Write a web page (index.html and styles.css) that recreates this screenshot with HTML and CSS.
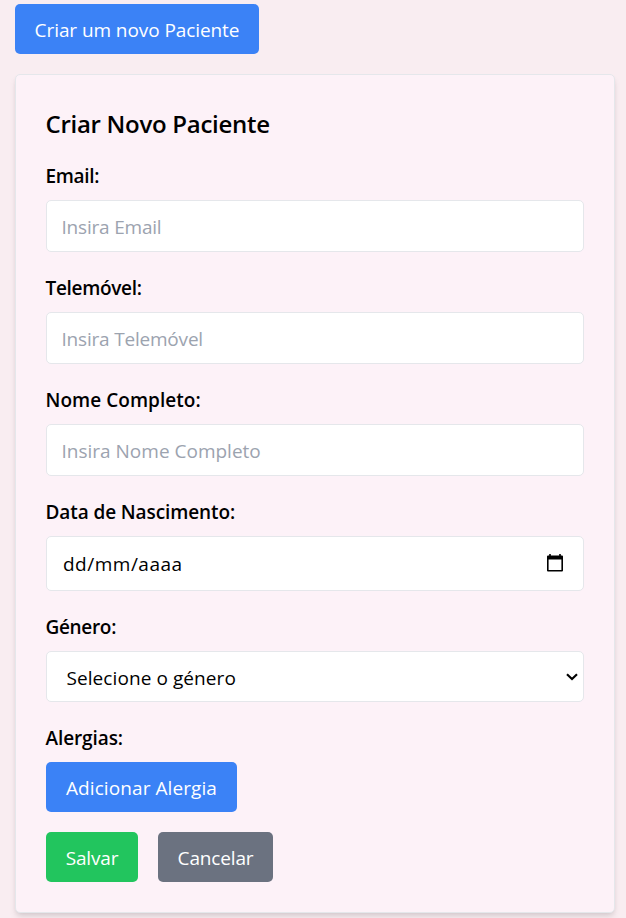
FILE: index.html
```html
<!DOCTYPE html>
<html lang="pt">
<head>
<meta charset="utf-8">
<title>Pacientes</title>
<link rel="stylesheet" href="styles.css">
</head>
<body>
<button class="btn btn-blue btn-create" type="button"><span>Criar um novo Paciente</span></button>
<form class="card">
  <h2 class="title">Criar Novo Paciente</h2>
  <div class="group">
    <label class="label" for="email">Email:</label>
    <input class="field" id="email" type="text" placeholder="Insira Email">
  </div>
  <div class="group">
    <label class="label" for="phone">Telemóvel:</label>
    <input class="field" id="phone" type="text" placeholder="Insira Telemóvel">
  </div>
  <div class="group">
    <label class="label label-name" for="name">Nome Completo:</label>
    <input class="field field-name" id="name" type="text" placeholder="Insira Nome Completo">
  </div>
  <div class="group">
    <span class="label label-loose">Data de Nascimento:</span>
    <div class="field date">
      <span>dd/mm/aaaa</span>
      <svg width="18" height="20" viewBox="0 0 18 20"><path fill="#000" fill-rule="evenodd" d="M3.200 1h1.600v1.500h8.400V1h1.600v1.500h1.200q1 0 1 1v14q0 1-1 1H2q-1 0-1-1v-14q0-1 1-1h1.200zM2.600 6.500v10.500h12.800V6.500z"/></svg>
    </div>
  </div>
  <div class="group">
    <span class="label">Género:</span>
    <div class="field select">
      <span>Selecione o género</span>
      <svg width="12" height="8" viewBox="0 0 12 8"><path fill="none" stroke="#000" stroke-width="2.1" d="M1 1.2 6 6.1 11 1.2"/></svg>
    </div>
  </div>
  <div class="allergies">
    <span class="label label-loose">Alergias:</span>
    <button class="btn btn-blue btn-add" type="button"><span>Adicionar Alergia</span></button>
  </div>
  <div class="actions">
    <button class="btn btn-green" type="button"><span>Salvar</span></button>
    <button class="btn btn-gray" type="button"><span>Cancelar</span></button>
  </div>
</form>
</body>
</html>
```
FILE: styles.css
```css
* { box-sizing: border-box; }
body {
  margin: 0;
  height: 918px;
  overflow: hidden;
  padding: 4px 11px 0 15px;
  background: #f9edf1;
  font: 19px/30px "Segoe UI", "Open Sans", sans-serif;
  color: #000;
}
.btn {
  display: block;
  height: 50px;
  padding: 2px 0 0 0;
  border: 0;
  border-radius: 5px;
  font: inherit;
  letter-spacing: -.15px;
  text-align: center;
  color: #fff;
}
.btn-blue { background: #3b82f6; }
.btn-create { width: 244px; letter-spacing: -.08px; }
.btn-add { width: 191px; letter-spacing: .08px; }
.btn-green { width: 92px; background: #22c55e; }
.btn-gray { width: 115px; background: #6b7280; }
.card {
  height: 839px;
  margin-top: 20px;
  padding: 30px;
  border: 1px solid #e5e7eb;
  border-radius: 5px;
  background: #fdf2f8;
  box-shadow: 0 5px 7.5px -1px rgba(0,0,0,.1), 0 2.5px 5px -2.5px rgba(0,0,0,.1);
}
.title {
  height: 39px;
  margin: 0 0 16px -.5px;
  font-size: 24px;
  font-weight: 600;
  line-height: 37px;
  letter-spacing: -.28px;
}
.group { margin-bottom: 20px; }
.label {
  display: block;
  height: 30px;
  margin: 0 0 10px -.5px;
  font-weight: 600;
  line-height: 33px;
  letter-spacing: -.32px;
}
.label-name { letter-spacing: .04px; }
.label-loose { letter-spacing: -.1px; }
.field {
  display: flex;
  width: 100%;
  height: 52px;
  padding: 2px 15px 0 14.5px;
  border: 1px solid #e5e7eb;
  border-radius: 5px;
  background: #fff;
  font: inherit;
  color: #000;
  align-items: center;
  letter-spacing: -.2px;
}
.field-name { letter-spacing: 0; }
.field::placeholder { color: #9ca3af; opacity: 1; }
.date {
  height: 55px;
  padding: 0 19px 0 16px;
  justify-content: space-between;
  letter-spacing: .5px;
}
.date svg { margin-bottom: 1px; }
.select {
  height: 51px;
  padding: 2px 5px 0 19.5px;
  justify-content: space-between;
  letter-spacing: .08px;
}
.select svg { margin-bottom: 2px; }
.actions { display: flex; gap: 20px; margin-top: 20px; }
```
